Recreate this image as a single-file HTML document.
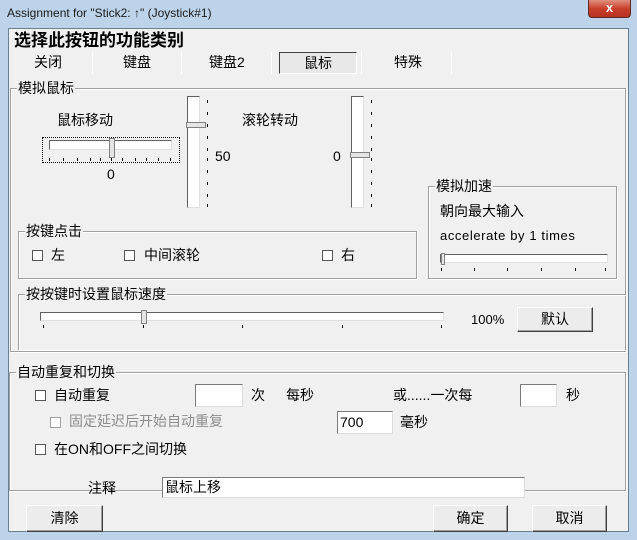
<!DOCTYPE html>
<html><head><meta charset="utf-8"><style>
*{margin:0;padding:0;box-sizing:border-box}
body{width:637px;height:540px;overflow:hidden;position:relative;background:#bcd3ea;font-family:"Liberation Sans","Noto Sans CJK SC",sans-serif;font-size:14px;line-height:16px;color:#000}
.a{position:absolute;white-space:nowrap}
.client{position:absolute;left:8px;top:28px;width:621px;height:504px;background:#f0f0f0;border:1px solid #6b7f93}
.grp{position:absolute;border:1px solid #a0a0a0;box-shadow:1px 1px 0 #fff inset,1px 1px 0 #fff}
.gt{position:absolute;top:-9px;left:6px;background:#f0f0f0;padding:0 1px;line-height:16px}
.edit{position:absolute;background:#fff;border:1px solid;border-color:#7a7a7a #dcdcdc #dcdcdc #7a7a7a}
.cb{position:absolute;width:11px;height:11px;border:1px solid #555;background:#fff}
.btn{position:absolute;background:#ececec;border:1px solid;border-color:#fff #404040 #404040 #fff;box-shadow:inset -1px -1px 0 #a0a0a0;text-align:center;line-height:22px}
.htrack{position:absolute;height:9px;background:#fff;border:1px solid;border-color:#606060 #e0e0e0 #e0e0e0 #606060}
.vtrack{position:absolute;width:13px;background:#fff;border:1px solid;border-color:#606060 #e0e0e0 #e0e0e0 #606060}
.tk{position:absolute;background:#000;width:1px;height:3px}
.sep{position:absolute;top:52px;width:1px;height:22px;background:#a0a0a0;border-right:1px solid #fff}
</style></head><body>
<div class="a" style="left:7px;top:5px;font-size:12px;color:#1a1a1a">Assignment for "Stick2: ↑" (Joystick#1)</div>
<div class="a" style="left:588px;top:0;width:43px;height:18px;background:linear-gradient(#e09080,#c8402c 50%,#b83020);border:1px solid #5a2a24;border-top:none;border-radius:0 0 4px 4px;color:#fff;font-weight:bold;text-align:center;line-height:16px;font-size:13px">x</div>
<div class="client"></div>
<div class="a" style="left:14px;top:31px;font-size:17px;line-height:20px;font-weight:bold">选择此按钮的功能类别</div>
<div class="a" style="left:34px;top:54px">关闭</div>
<div class="a" style="left:123px;top:54px">键盘</div>
<div class="a" style="left:209px;top:54px">键盘2</div>
<div class="a" style="left:279px;top:52px;width:78px;height:22px;border:1px solid;border-color:#404040 #fff #fff #404040;background:#e8e8e8;text-align:center;line-height:20px">鼠标</div>
<div class="a" style="left:394px;top:54px">特殊</div>
<div class="sep" style="left:92px"></div><div class="sep" style="left:181px"></div><div class="sep" style="left:271px"></div><div class="sep" style="left:361px"></div><div class="sep" style="left:451px"></div>

<div class="grp" style="left:10px;top:88px;width:616px;height:264px"><div class="gt">模拟鼠标</div></div>
<div class="a" style="left:57px;top:112px">鼠标移动</div>
<div class="a" style="left:42px;top:137px;width:138px;height:26px;border:1px dotted #000"></div>
<div class="htrack" style="left:49px;top:140px;width:123px;height:10px"></div>
<div class="a" style="left:109px;top:138px;width:6px;height:20px;background:#e4e4e4;border:1px solid #808080"></div>
<div class="a" style="left:107px;top:166px">0</div>
<div class="vtrack" style="left:187px;top:96px;height:112px"></div>
<div class="a" style="left:186px;top:122px;width:20px;height:6px;background:#e4e4e4;border:1px solid #808080"></div>
<div class="a" style="left:215px;top:148px">50</div>
<div class="a" style="left:242px;top:112px">滚轮转动</div>
<div class="vtrack" style="left:351px;top:96px;height:112px"></div>
<div class="a" style="left:350px;top:152px;width:20px;height:6px;background:#e4e4e4;border:1px solid #808080"></div>
<div class="a" style="left:333px;top:148px">0</div>

<div class="grp" style="left:428px;top:186px;width:189px;height:93px"><div class="gt">模拟加速</div></div>
<div class="a" style="left:440px;top:203px">朝向最大输入</div>
<div class="a" style="left:440px;top:228px;font-size:13px;letter-spacing:0.6px">accelerate by 1 times</div>
<div class="htrack" style="left:440px;top:254px;width:168px"></div>
<div class="a" style="left:441px;top:253px;width:4px;height:12px;background:#e4e4e4;border:1px solid #808080"></div>

<div class="grp" style="left:18px;top:231px;width:399px;height:48px"><div class="gt">按键点击</div></div>
<div class="cb" style="left:32px;top:250px"></div><div class="a" style="left:51px;top:247px">左</div>
<div class="cb" style="left:124px;top:250px"></div><div class="a" style="left:144px;top:247px">中间滚轮</div>
<div class="cb" style="left:322px;top:250px"></div><div class="a" style="left:341px;top:247px">右</div>

<div class="grp" style="left:18px;top:294px;width:608px;height:56px;border-right:none;border-bottom:none"><div class="gt">按按键时设置鼠标速度</div></div>
<div class="htrack" style="left:40px;top:312px;width:404px"></div>
<div class="a" style="left:141px;top:310px;width:6px;height:14px;background:#e4e4e4;border:1px solid #808080"></div>
<div class="a" style="left:471px;top:312px;font-size:13px">100%</div>
<div class="btn" style="left:517px;top:307px;width:76px;height:25px">默认</div>

<div class="grp" style="left:9px;top:372px;width:617px;height:119px"><div class="gt">自动重复和切换</div></div>
<div class="cb" style="left:35px;top:390px"></div><div class="a" style="left:54px;top:387px">自动重复</div>
<div class="edit" style="left:195px;top:384px;width:48px;height:23px"></div>
<div class="a" style="left:251px;top:387px">次</div><div class="a" style="left:286px;top:387px">每秒</div>
<div class="a" style="left:393px;top:387px">或......一次每</div>
<div class="edit" style="left:520px;top:384px;width:37px;height:23px"></div>
<div class="a" style="left:566px;top:387px">秒</div>
<div class="cb" style="left:50px;top:417px;border-color:#a0a0a0"></div><div class="a" style="left:69px;top:413px;color:#8c8c8c">固定延迟后开始自动重复</div>
<div class="edit" style="left:337px;top:411px;width:56px;height:23px;padding-left:2px;line-height:21px">700</div>
<div class="a" style="left:400px;top:414px">毫秒</div>
<div class="cb" style="left:35px;top:444px"></div><div class="a" style="left:54px;top:441px">在ON和OFF之间切换</div>

<div class="a" style="left:88px;top:480px">注释</div>
<div class="edit" style="left:162px;top:477px;width:363px;height:21px;padding-left:2px;line-height:19px">鼠标上移</div>
<div class="btn" style="left:26px;top:505px;width:77px;height:27px;line-height:24px">清除</div>
<div class="btn" style="left:433px;top:505px;width:75px;height:27px;line-height:24px">确定</div>
<div class="btn" style="left:532px;top:505px;width:75px;height:27px;line-height:24px">取消</div>

<div class="tk" style="left:207px;top:100px"></div><div class="tk" style="left:207px;top:112px"></div><div class="tk" style="left:207px;top:124px"></div><div class="tk" style="left:207px;top:136px"></div><div class="tk" style="left:207px;top:148px"></div><div class="tk" style="left:207px;top:158px"></div><div class="tk" style="left:207px;top:170px"></div><div class="tk" style="left:207px;top:182px"></div><div class="tk" style="left:207px;top:194px"></div><div class="tk" style="left:207px;top:204px"></div>
<div class="tk" style="left:371px;top:100px"></div><div class="tk" style="left:371px;top:112px"></div><div class="tk" style="left:371px;top:124px"></div><div class="tk" style="left:371px;top:136px"></div><div class="tk" style="left:371px;top:148px"></div><div class="tk" style="left:371px;top:158px"></div><div class="tk" style="left:371px;top:170px"></div><div class="tk" style="left:371px;top:182px"></div><div class="tk" style="left:371px;top:194px"></div><div class="tk" style="left:371px;top:204px"></div>
<div class="tk" style="left:49px;top:158px"></div><div class="tk" style="left:63px;top:158px"></div><div class="tk" style="left:77px;top:158px"></div><div class="tk" style="left:90px;top:158px"></div><div class="tk" style="left:100px;top:158px"></div><div class="tk" style="left:111px;top:158px"></div><div class="tk" style="left:122px;top:158px"></div><div class="tk" style="left:135px;top:158px"></div><div class="tk" style="left:146px;top:158px"></div><div class="tk" style="left:158px;top:158px"></div><div class="tk" style="left:170px;top:158px"></div>
<div class="tk" style="left:441px;top:268px"></div><div class="tk" style="left:474px;top:268px"></div><div class="tk" style="left:507px;top:268px"></div><div class="tk" style="left:541px;top:268px"></div><div class="tk" style="left:575px;top:268px"></div><div class="tk" style="left:605px;top:268px"></div>
<div class="tk" style="left:43px;top:325px"></div><div class="tk" style="left:143px;top:325px"></div><div class="tk" style="left:242px;top:325px"></div><div class="tk" style="left:342px;top:325px"></div><div class="tk" style="left:441px;top:325px"></div>
</body></html>
